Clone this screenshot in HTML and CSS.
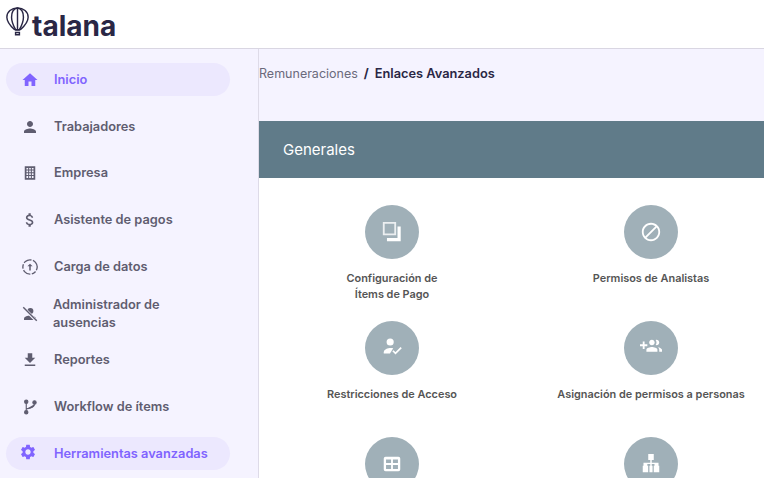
FILE: index.html
```html
<!DOCTYPE html>
<html lang="es">
<head>
  <meta charset="UTF-8" />
  <meta name="viewport" content="width=device-width, initial-scale=1.0"/>
  <title>Enlaces Avanzados - talana</title>
  <link rel="stylesheet" href="styles.css">
</head>
<body>

  <header class="topbar">
    <div class="logo">
      <svg class="logo-balloon" viewBox="0 0 24 30" fill="none" stroke="#2a2745" stroke-width="1.5">
        <path d="M9 23.5C5 20 .9 15.5.9 10.5.9 4.8 5.8.9 12 .9s11.100 3.900 11.100 9.600c0 5-4.100 9.500-8.100 13z"/>
        <path d="M10 23.500C7.500 19 5.800 14.500 5.800 10.500 5.800 5 8.500 1.500 12 .9c3.500.6 6.200 4.100 6.200 9.600 0 4-1.700 8.500-4.200 13"/>
        <path d="M12 1v22.500"/>
        <path d="M9.500 24h5M10 26.500h4v2.300h-4z"/>
      </svg>
      <span class="logo-text">talana</span>
    </div>
  </header>

  <div class="layout">
    <nav class="sidebar">
      <a class="nav-item active">
        <span class="nav-pill">
          <svg class="nav-icon" viewBox="0 0 24 24"><path d="M10 20v-6h4v6h5v-8h3L12 3 2 12h3v8z"/></svg>
          Inicio
        </span>
      </a>
      <a class="nav-item">
        <span class="nav-pill">
          <svg class="nav-icon" viewBox="0 0 24 24"><path d="M12 12c2.210 0 4-1.790 4-4s-1.790-4-4-4-4 1.790-4 4 1.790 4 4 4zm0 2c-2.670 0-8 1.340-8 4v2h16v-2c0-2.660-5.330-4-8-4z"/></svg>
          Trabajadores
        </span>
      </a>
      <a class="nav-item">
        <span class="nav-pill">
          <svg class="nav-icon" viewBox="0 0 24 24"><path fill-rule="evenodd" d="M5 3h14v18H5zM7.300 5.200v2.200h2.200V5.200zm3.600 0v2.200h2.200V5.200zm3.600 0v2.200h2.200V5.200zM7.300 8.800V11h2.200V8.800zm3.600 0V11h2.200V8.800zm3.600 0V11h2.200V8.800zM7.300 12.400v2.200h2.200v-2.200zm3.600 0v2.200h2.200v-2.200zm3.600 0v2.200h2.200v-2.200zM7.300 16v2.800h2.200V16zm3.600 0v2.800h2.200V16zm3.600 0v2.800h2.200V16z"/></svg>
          Empresa
        </span>
      </a>
      <a class="nav-item">
        <span class="nav-pill">
          <svg class="nav-icon" viewBox="0 0 24 24"><path d="M11.800 10.900c-2.270-.59-3-1.200-3-2.150 0-1.090 1.010-1.850 2.700-1.850 1.780 0 2.440.85 2.500 2.100h2.210c-.07-1.720-1.120-3.300-3.210-3.810V3h-3v2.160c-1.940.42-3.500 1.680-3.500 3.610 0 2.310 1.910 3.460 4.700 4.130 2.500.6 3 1.480 3 2.410 0 .69-.49 1.790-2.700 1.790-2.060 0-2.870-.92-2.980-2.100h-2.200c.12 2.190 1.760 3.420 3.680 3.830V21h3v-2.150c1.950-.37 3.500-1.500 3.500-3.550 0-2.840-2.430-3.810-4.700-4.400z"/></svg>
          Asistente de pagos
        </span>
      </a>
      <a class="nav-item">
        <span class="nav-pill">
          <svg class="nav-icon" viewBox="0 0 24 24"><circle cx="12" cy="12" r="9.500" fill="none" stroke="#5f5d70" stroke-width="1.800" stroke-dasharray="11 2 6 2" transform="rotate(-40 12 12)"/><path d="M12 7.500l-3.500 3.500h2.500v5.500h2V11h2.500z"/></svg>
          Carga de datos
        </span>
      </a>
      <a class="nav-item two-lines">
        <span class="nav-pill">
          <svg class="nav-icon" viewBox="0 0 24 24"><circle cx="12.500" cy="8" r="4"/><path d="M12 14c-2.700 0-8 1.300-8 4v2h16v-2c0-2.700-5.300-4-8-4z"/><path d="M3 3.500l18 18" stroke="#f5f3ff" stroke-width="4"/><path d="M3 3l18 18" stroke="#5f5d70" stroke-width="1.800"/></svg>
          <span>Administrador de<br>ausencias</span>
        </span>
      </a>
      <a class="nav-item">
        <span class="nav-pill">
          <svg class="nav-icon" viewBox="0 0 24 24"><path d="M19 9h-4V3H9v6H5l7 7 7-7zM5 18v2h14v-2H5z"/></svg>
          Reportes
        </span>
      </a>
      <a class="nav-item">
        <span class="nav-pill">
          <svg class="nav-icon" viewBox="0 0 24 24" fill="none" stroke="#5f5d70" stroke-width="1.500"><circle cx="7" cy="5" r="2.200"/><circle cx="7" cy="19" r="2.200"/><circle cx="18" cy="6" r="2.200"/><path d="M7 7.200v9.600M18 8.200c0 3.800-4 5.300-11 6.300"/></svg>
          Workflow de ítems
        </span>
      </a>
      <a class="nav-item active">
        <span class="nav-pill">
          <svg class="nav-icon gear" viewBox="0 0 24 24"><path d="M19.140 12.940c.04-.3.06-.61.06-.94 0-.32-.02-.64-.07-.94l2.030-1.580c.18-.14.23-.41.12-.61l-1.920-3.320c-.12-.22-.37-.29-.59-.22l-2.390.96c-.5-.38-1.030-.7-1.620-.94l-.36-2.540c-.04-.24-.24-.41-.48-.41h-3.840c-.24 0-.43.17-.47.41l-.36 2.540c-.59.24-1.130.57-1.620.94l-2.390-.96c-.22-.08-.47 0-.59.22L2.740 8.870c-.12.21-.08.47.12.61l2.030 1.580c-.05.3-.09.63-.09.94s.02.64.07.94l-2.030 1.580c-.18.14-.23.41-.12.61l1.920 3.320c.12.22.37.29.59.22l2.390-.96c.5.38 1.030.7 1.620.94l.36 2.540c.05.24.24.41.48.41h3.840c.24 0 .44-.17.47-.41l.36-2.540c.59-.24 1.130-.56 1.620-.94l2.390.96c.22.08.47 0 .59-.22l1.920-3.320c.12-.22.07-.47-.12-.61l-2.010-1.580zM12 15.600c-1.980 0-3.600-1.620-3.600-3.600s1.620-3.600 3.600-3.600 3.600 1.620 3.600 3.600-1.620 3.600-3.600 3.600z"/></svg>
          Herramientas avanzadas
        </span>
      </a>
    </nav>

    <main class="content">
      <div class="breadcrumb">
        <span class="crumb">Remuneraciones</span>
        <span class="crumb-sep">/</span>
        <span class="crumb-current">Enlaces Avanzados</span>
      </div>

      <section class="card">
        <div class="card-head">Generales</div>
        <div class="card-grid">
          <a class="link-item">
            <span class="circle">
              <svg viewBox="0 0 24 24"><path fill-opacity=".8" fill-rule="evenodd" d="M2 1h14.500v14.500H2zM4 3v10.500h10.500V3z"/><path d="M18 6h3.500v16H6.500v-3.500H18z"/></svg>
            </span>
            <span class="link-label">Configuración de<br>Ítems de Pago</span>
          </a>
          <a class="link-item">
            <span class="circle">
              <svg viewBox="0 0 24 24"><path d="M12 2C6.480 2 2 6.480 2 12s4.480 10 10 10 10-4.480 10-10S17.520 2 12 2zM4 12c0-4.420 3.580-8 8-8 1.850 0 3.550.63 4.900 1.690L5.690 16.900C4.630 15.550 4 13.850 4 12zm8 8c-1.850 0-3.550-.63-4.900-1.690L18.310 7.100C19.370 8.450 20 10.150 20 12c0 4.420-3.580 8-8 8z"/></svg>
            </span>
            <span class="link-label">Permisos de Analistas</span>
          </a>
          <a class="link-item">
            <span class="circle">
              <svg viewBox="0 0 24 24"><circle cx="10" cy="5.500" r="3.900"/><path d="M3 18v-1.500c0-2.900 4.500-4.500 7.500-4.500 1 0 2 .1 2.800.3L9.800 18z"/><path d="M13 15l2.800 2.800L22 11.500" fill="none" stroke="#fff" stroke-width="1.900"/></svg>
            </span>
            <span class="link-label">Restricciones de Acceso</span>
          </a>
          <a class="link-item">
            <span class="circle">
              <svg viewBox="0 2 24 24"><path d="M8 10H5V7H3v3H0v2h3v3h2v-3h3v-2zm10 1c1.660 0 2.990-1.340 2.990-3S19.660 5 18 5c-.32 0-.63.05-.91.14.57.81.9 1.790.9 2.860s-.34 2.040-.9 2.860c.28.09.59.14.91.14zm-5 0c1.660 0 2.990-1.340 2.990-3S14.660 5 13 5s-3 1.340-3 3 1.340 3 3 3zm6.620 2.160c.83.73 1.380 1.660 1.380 2.840v2h3v-2c0-1.540-2.370-2.490-4.380-2.840zM13 13c-2 0-6 1-6 3v2h12v-2c0-2-4-3-6-3z"/></svg>
            </span>
            <span class="link-label">Asignación de permisos a personas</span>
          </a>
          <a class="link-item">
            <span class="circle">
              <svg viewBox="0 0 24 24"><path fill-rule="evenodd" d="M5 4h14a2 2 0 0 1 2 2v12a2 2 0 0 1-2 2H5a2 2 0 0 1-2-2V6a2 2 0 0 1 2-2zm.500 3v4H11V7zm7.500 0v4h5.500V7zM5.500 13v4.500H11V13zm7.500 0v4.500h5.500V13z"/></svg>
            </span>
          </a>
          <a class="link-item">
            <span class="circle">
              <svg viewBox="0 0 24 24"><path d="M9 1h6v6.500h-2.200v3h7.400V14H21v7h-6v-7h.8v-2h-3v2h.9v7H10.300v-7h.9v-2H8v2h.9v7H3v-7h.8v-3.500h7.400v-3H9z"/></svg>
            </span>
          </a>
        </div>
      </section>
    </main>
  </div>

</body>
</html>
```

FILE: styles.css
```css
* { margin: 0; padding: 0; box-sizing: border-box; }
html, body {
  height: 478px;
  overflow: hidden;
}
body {
  font-family: Inter, 'Noto Sans', sans-serif;
  background: #f5f3ff;
  color: #2a2745;
}
.topbar {
  height: 49px;
  background: white;
  border-bottom: 1px solid #d9d6e2;
  padding: 7px 0 0 6px;
}
.logo {
  display: flex;
  align-items: flex-start;
}
.logo-balloon {
  width: 23px;
  height: 29px;
}
.logo-text {
  margin: 3px 0 0 3px;
  font-size: 28px;
  line-height: 32px;
  font-weight: 700;
  color: #2a2745;
}
.layout {
  display: flex;
}
.sidebar {
  flex: 0 0 259px;
  height: 429px;
  padding: 7.400px 0 0 6px;
  border-right: 1px solid #dedbe8;
}
.nav-item {
  display: flex;
  align-items: center;
  height: 46.750px;
  width: 224px;
  color: #5f5d70;
  font-size: 12.800px;
  font-weight: 600;
  line-height: 18px;
}
.nav-pill {
  display: flex;
  align-items: center;
  width: 100%;
  height: 33px;
  padding-left: 15px;
  border-radius: 17px;
}
.nav-icon {
  flex: none;
  width: 18px;
  height: 18px;
  margin-right: 15px;
  fill: #5f5d70;
}
.two-lines .nav-icon {
  margin-right: 14px;
}
.active {
  color: #8064ff;
}
.active .nav-pill {
  background: #ece8fe;
}
.active .nav-icon {
  fill: #8064ff;
}
.gear {
  margin: 0 17px 3px -2px;
}
.content {
  flex: 1;
  min-width: 0;
  overflow: hidden;
}
.breadcrumb {
  display: flex;
  align-items: center;
  height: 72px;
  padding-bottom: 23px;
  font-size: 12.800px;
}
.crumb {
  color: #6b6a7c;
  font-size: 12.500px;
}
.crumb-sep {
  margin: 0 6px;
  font-weight: 700;
}
.crumb-current {
  font-weight: 600;
}
.card {
  width: 540px;
  background: white;
}
.card-head {
  height: 57px;
  padding-left: 24px;
  background: #607b89;
  color: white;
  font-size: 15px;
  line-height: 57px;
}
.card-grid {
  display: grid;
  grid-template-columns: 259px 259px;
  grid-auto-rows: 116px;
  padding: 27px 0 0 3.500px;
}
.link-item {
  display: flex;
  flex-direction: column;
  align-items: center;
}
.circle {
  display: flex;
  align-items: center;
  justify-content: center;
  width: 54px;
  height: 54px;
  border-radius: 50%;
  background: #a0b0b8;
}
.circle svg {
  width: 22px;
  height: 22px;
  fill: white;
}
.link-label {
  margin-top: 11px;
  text-align: center;
  color: #555;
  font-size: 10.900px;
  font-weight: 600;
  line-height: 16px;
}
```
